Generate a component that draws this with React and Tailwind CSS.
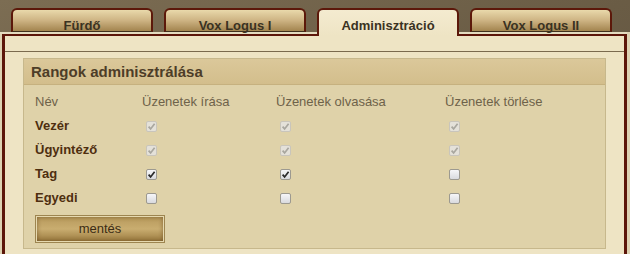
import React from "react";

function Cb({ checked, disabled }) {
  return (
    <div
      className={
        disabled
          ? "w-[11px] h-[11px] rounded-[2px] border border-[#c9c5bb] bg-[#e4e1d9] flex items-center justify-center"
          : "w-[11px] h-[11px] rounded-[2px] border border-[#9c9990] bg-gradient-to-b from-[#f6f6f8] to-[#d9dade] flex items-center justify-center"
      }
    >
      {checked && (
        <svg width="9" height="9" viewBox="0 0 9 9">
          <path
            d="M1.6 4.6 L3.6 6.9 L7.6 1.7"
            stroke={disabled ? "#a9a79f" : "#2a2a2a"}
            strokeWidth="1.7"
            fill="none"
          />
        </svg>
      )}
    </div>
  );
}

function Tab({ label, active }) {
  if (active) {
    return (
      <div className="relative z-10 w-[142px] h-[28px] rounded-t-[6px] border-2 border-b-0 border-[#5c180a] bg-gradient-to-b from-[#f4ebd0] to-[#eee4c4] flex justify-center pt-[8px] text-[13px] leading-[16px] font-bold text-[#3a3222]">
        {label}
      </div>
    );
  }
  return (
    <div className="w-[142px] h-[24px] rounded-t-[6px] border-2 border-b border-[#5c180a] border-b-[#3f2f1c] bg-gradient-to-b from-[#e9d9ab] via-[#cdb383] to-[#a3854f] flex justify-center pt-[8px] text-[13px] leading-[16px] font-bold text-[#3a3222]">
      {label}
    </div>
  );
}

const rows = [
  { name: "Vezér", v: [true, true, true], d: true },
  { name: "Ügyintéző", v: [true, true, true], d: true },
  { name: "Tag", v: [true, true, false], d: false },
  { name: "Egyedi", v: [false, false, false], d: false },
];

export default function App() {
  return (
    <div
      className="w-[630px] h-[254px] overflow-hidden bg-gradient-to-br from-[#7c6d53] via-[#6a5c45] to-[#5e5140]"
      style={{ fontFamily: '"Liberation Sans", Arial, sans-serif' }}
    >
      <div className="h-[32px] pt-[8px] pl-[11px] flex items-start gap-[11px]">
        <Tab label="Fürdő" />
        <Tab label="Vox Logus I" />
        <Tab label="Adminisztráció" active />
        <Tab label="Vox Logus II" />
      </div>
      <div className="bg-[#ddd2b2] h-[222px] pr-[3px]">
        <div className="h-[2px] bg-[#e4dcc0]" />
        <div className="ml-[2px] h-[220px] border-t-2 border-l-[3px] border-r-[3px] border-[#5c160a] bg-[#eee4c4]">
          <div className="h-[16px] border-b border-[#7a6a4e]" />
          <div className="pt-[6px] px-[18px]">
            <div className="border border-[#c7b88c] bg-[#dfd2a9] h-[191px]">
              <div className="h-[26px] bg-gradient-to-b from-[#dbc89a] to-[#d3be8c] border-b border-[#c6b17f] flex items-center pl-[7px] pt-[1px] text-[15px] font-bold text-[#4d3d28]">
                Rangok adminisztrálása
              </div>
              <div className="pt-[5px] pl-[11px] text-[13px]">
                <div className="flex items-center h-[24px] text-[#6e624a]">
                  <div className="w-[107px]">Név</div>
                  <div className="w-[134px]">Üzenetek írása</div>
                  <div className="w-[169px]">Üzenetek olvasása</div>
                  <div>Üzenetek törlése</div>
                </div>
                {rows.map((r) => (
                  <div key={r.name} className="flex items-center h-[24px]">
                    <div className="w-[107px] font-bold text-[#4e2e0f]">{r.name}</div>
                    <div className="w-[134px] pl-[4px]">
                      <Cb checked={r.v[0]} disabled={r.d} />
                    </div>
                    <div className="w-[169px] pl-[4px]">
                      <Cb checked={r.v[1]} disabled={r.d} />
                    </div>
                    <div className="pl-[4px]">
                      <Cb checked={r.v[2]} disabled={r.d} />
                    </div>
                  </div>
                ))}
                <div className="mt-[5px] w-[130px] h-[28px] border border-[#9d8550] p-[1px] bg-[#e6d9b0]">
                  <div className="h-full flex items-center justify-center text-[13px] text-[#3c2c14] bg-gradient-to-b from-[#b89a5c] via-[#c9ad70] to-[#9c7c40] shadow-[inset_0_0_4px_rgba(90,60,20,0.6)]">
                    mentés
                  </div>
                </div>
              </div>
            </div>
          </div>
        </div>
      </div>
    </div>
  );
}
